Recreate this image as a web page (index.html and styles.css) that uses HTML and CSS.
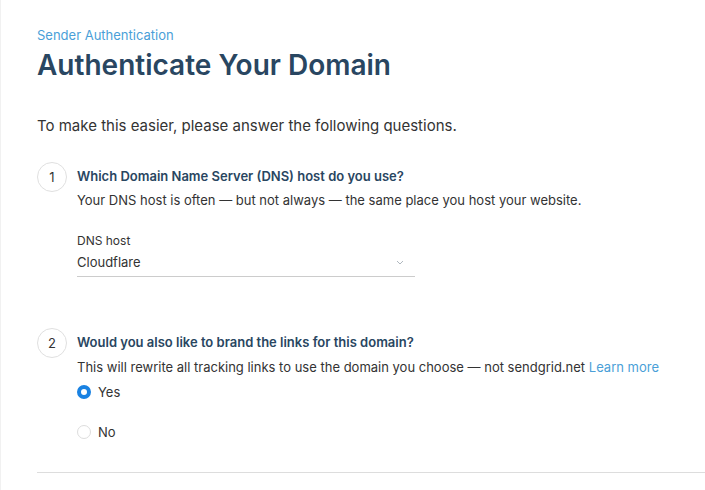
FILE: index.html
```html
<!DOCTYPE html>
<html lang="en">
<head>
  <meta charset="UTF-8" />
  <title>Authenticate Your Domain</title>
  <link rel="stylesheet" href="styles.css">
</head>
<body>
  <div class="page">
    <header class="page-header">
      <p class="breadcrumb">Sender Authentication</p>
      <h1>Authenticate Your Domain</h1>
    </header>

    <p class="intro">To make this easier, please answer the following questions.</p>

    <section class="step">
      <div class="step-num">1</div>
      <div class="step-body">
        <h3>Which Domain Name Server (DNS) host do you use?</h3>
        <p class="help">Your DNS host is often — but not always — the same place you host your website.</p>

        <div class="select-field">
          <label>DNS host</label>
          <div class="select">
            <span>Cloudflare</span>
            <svg width="8" height="5" viewBox="0 0 8 5"><path d="M1 1l3 3 3-3" fill="none" stroke="#b0b8bf" stroke-width="1"/></svg>
          </div>
        </div>
      </div>
    </section>

    <section class="step step-2">
      <div class="step-num">2</div>
      <div class="step-body">
        <h3>Would you also like to brand the links for this domain?</h3>
        <p class="help">This will rewrite all tracking links to use the domain you choose — not sendgrid.net <a href="#">Learn more</a></p>

        <div class="radios">
          <label class="radio checked"><span class="dot"></span>Yes</label>
          <label class="radio"><span class="dot"></span>No</label>
        </div>
      </div>
    </section>

    <hr class="divider">
  </div>
</body>
</html>
```

FILE: styles.css
```css
* {
  margin: 0;
  padding: 0;
  box-sizing: border-box;
}

body {
  font-family: Inter, 'Liberation Sans', sans-serif;
  background: #fff;
  color: #333;
  border-left: 1px solid #f1f1f1;
  min-height: 100vh;
}

.page {
  padding: 27px 0 0 36px;
}

.breadcrumb {
  font-size: 13px;
  color: #4a9fd8;
  line-height: 16px;
}

h1 {
  font-size: 28px;
  font-weight: 600;
  color: #294661;
  line-height: 36px;
  margin-top: 4px;
}

.intro {
  font-size: 15px;
  line-height: 20px;
  margin-top: 33px;
}

.step {
  display: flex;
  gap: 10px;
  margin-top: 26px;
}

.step-2 {
  margin-top: 51px;
}

.step-num {
  width: 30px;
  height: 30px;
  border: 1px solid #e0e0e0;
  border-radius: 50%;
  display: flex;
  align-items: center;
  justify-content: center;
  font-size: 13px;
  color: #333;
  flex-shrink: 0;
}

.step-body {
  padding-top: 6px;
}

.step-body h3 {
  font-size: 13px;
  font-weight: 600;
  color: #294661;
  line-height: 16px;
}

.help {
  font-size: 13px;
  line-height: 16px;
  margin-top: 8px;
}

.step-2 .help {
  margin-top: 9px;
}

.help a {
  color: #4a9fd8;
  text-decoration: none;
}

.select-field {
  margin-top: 25px;
  width: 338px;
}

.select-field label {
  display: block;
  font-size: 12px;
  line-height: 15px;
}

.select {
  display: flex;
  justify-content: space-between;
  align-items: center;
  font-size: 13px;
  line-height: 16px;
  padding: 6px 11px 6px 0;
  border-bottom: 1px solid #ccc;
}

.radios {
  display: flex;
  flex-direction: column;
  gap: 24px;
  margin-top: 9px;
}

.radio {
  display: flex;
  align-items: center;
  gap: 7px;
  font-size: 13px;
  line-height: 16px;
  color: #333;
}

.dot {
  width: 14px;
  height: 14px;
  border-radius: 50%;
  border: 1px solid #ddd;
}

.radio.checked .dot {
  border: 4px solid #1a82e2;
  background: #fff;
}

.divider {
  border: none;
  border-top: 1px solid #ddd;
  margin-top: 32px;
}
```
